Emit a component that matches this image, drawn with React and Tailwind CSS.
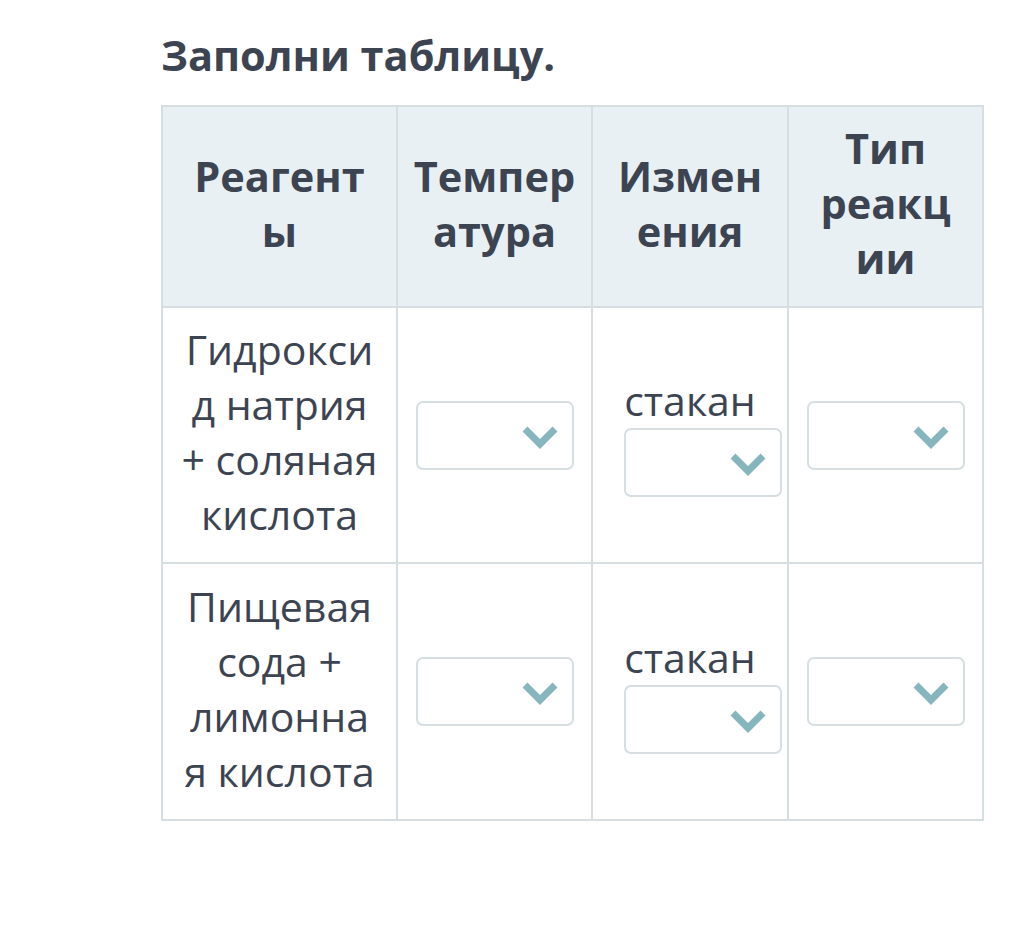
function Chevron() {
  return (
    <svg width="36" height="24" viewBox="0 0 36 24" fill="none">
      <path d="M3 4 L18 19 L33 4" stroke="#86b5bd" strokeWidth="7" strokeLinecap="butt" strokeLinejoin="miter" />
    </svg>
  );
}

function Select({ className = "" }) {
  return (
    <div className={`flex h-[69px] w-[158px] items-center justify-end rounded-[7px] border-2 border-[#d6dee1] bg-white pr-[14px] pt-[3px] ${className}`}>
      <Chevron />
    </div>
  );
}

function Glass() {
  return (
    <div className="flex flex-col">
      <span className="text-center">стакан</span>
      <Select className="ml-[13px]" />
    </div>
  );
}

function Lines({ lines }) {
  return lines.map((l, i) => (
    <span key={i} className="block whitespace-nowrap">
      {l}
    </span>
  ));
}

const headers = [
  ["Реагент", "ы"],
  ["Темпер", "атура"],
  ["Измен", "ения"],
  ["Тип", "реакц", "ии"],
];

const rows = [
  ["Гидрокси", "д натрия", "+ соляная", "кислота"],
  ["Пищевая", "сода +", "лимонна", "я кислота"],
];

export default function App() {
  return (
    <div
      className="min-h-screen bg-white pl-[161px] pt-[28px] text-[#3d4451]"
      style={{ fontFamily: '"Open Sans", "Noto Sans", sans-serif' }}
    >
      <h1 className="text-[41.5px] font-bold leading-[54px]">Заполни таблицу.</h1>
      <table className="mt-[23px] w-[821px] table-fixed border-collapse border-2 border-[#d6dee1] text-[41px] leading-[55px]">
        <colgroup>
          <col className="w-[235px]" />
          <col className="w-[195px]" />
          <col className="w-[196px]" />
          <col className="w-[195px]" />
        </colgroup>
        <thead>
          <tr className="h-[201px] bg-[#e9f0f4]">
            {headers.map((h) => (
              <th
                key={h[0]}
                className="border-2 border-[#d6dee1] px-[10px] pt-[7px] pb-[13px] text-center align-middle text-[41.5px] font-bold"
              >
                <Lines lines={h} />
              </th>
            ))}
          </tr>
        </thead>
        <tbody>
          {rows.map((r, i) => (
            <tr key={r[0]} className={i === 0 ? "h-[256px]" : "h-[257px]"}>
              <td className="border-2 border-[#d6dee1] px-[10px] pt-[7px] pb-[13px] text-center align-middle">
                <Lines lines={r} />
              </td>
              <td className="border-2 border-[#d6dee1] px-[18px] py-[8px] align-middle">
                <Select />
              </td>
              <td className="border-2 border-[#d6dee1] px-[18px] py-[8px] align-middle">
                <Glass />
              </td>
              <td className="border-2 border-[#d6dee1] px-[18px] py-[8px] align-middle">
                <Select />
              </td>
            </tr>
          ))}
        </tbody>
      </table>
    </div>
  );
}
